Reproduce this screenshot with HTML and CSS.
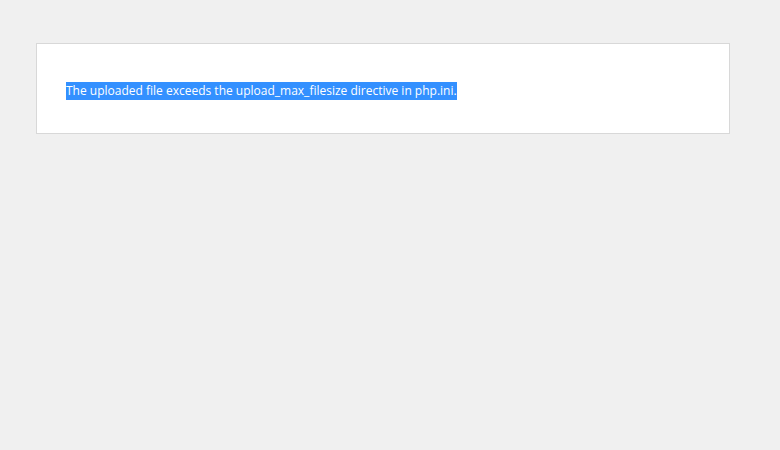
FILE: index.html
```
<!DOCTYPE html>
<html lang="en">
<head>
	<meta charset="UTF-8">
	<title>WordPress &rsaquo; Error</title>
	<link rel="stylesheet" href="styles.css">
</head>
<body>
    <div class="error_page">
        <p class="message"><span class="selected">The uploaded file exceeds the upload_max_filesize directive in php.ini.</span></p>
    </div>
</body>
</html>
```

FILE: styles.css
```
html{
    background: #f0f0f0;
}
body{
    margin: 0;
    padding: 43px 0 0 36px;
    font-family: "Open Sans", "Noto Sans", sans-serif;
    font-size: 12px;
    color: #444;
}
.error_page{
    width: 634px;
    padding: 38px 29px 33px;
    background: #fff;
    border: 1px solid #d8d8d8;
}
.message{
    margin: 0;
    line-height: 18px;
}
.selected{
    display: inline-block;
    background: #3390ff;
    color: #fff;
}
```
